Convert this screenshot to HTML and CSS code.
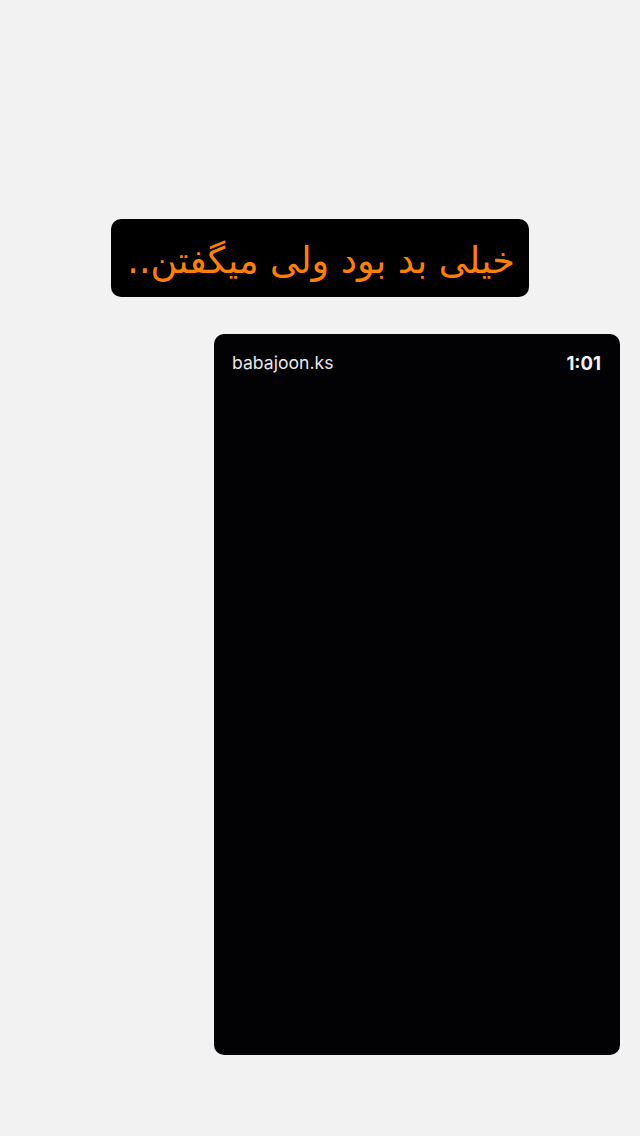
FILE: index.html
```html
<!DOCTYPE html>
<html lang="fa">
<head>
<meta charset="utf-8">
<link rel="stylesheet" href="styles.css">
</head>
<body>
<div class="page">
  <div class="caption" dir="rtl">خیلی بد بود ولی میگفتن..</div>
  <div class="card">
    <div class="card-head">
      <span class="user">babajoon.ks</span>
      <span class="time">1:01</span>
    </div>
  </div>
</div>
</body>
</html>
```
FILE: styles.css
```css
html, body {
  margin: 0;
  padding: 0;
  background: #f2f2f2;
}
.page {
  width: 640px;
  height: 1136px;
  display: flex;
  flex-direction: column;
  align-items: center;
  padding-top: 219px;
  box-sizing: border-box;
}
.caption {
  width: 418px;
  height: 78px;
  box-sizing: border-box;
  background: #000;
  border-radius: 10px;
  color: #ff8000;
  font-family: "DejaVu Sans", sans-serif;
  font-size: 36.5px;
  display: flex;
  align-items: center;
  justify-content: center;
  padding-top: 4px;
  padding-left: 2px;
}
.card {
  align-self: flex-start;
  margin-left: 214px;
  margin-top: 37px;
  width: 406px;
  height: 721px;
  background: #020103;
  border-radius: 10px;
}
.card-head {
  display: flex;
  justify-content: space-between;
  align-items: center;
  padding: 19px 19px 0 18px;
  font-family: Inter, "Liberation Sans", Arial, sans-serif;
  font-size: 17.6px;
  line-height: 20px;
  color: #e8e8e8;
}
.time {
  font-weight: 700;
  font-size: 18.5px;
  color: #f2f2f2;
}
```
